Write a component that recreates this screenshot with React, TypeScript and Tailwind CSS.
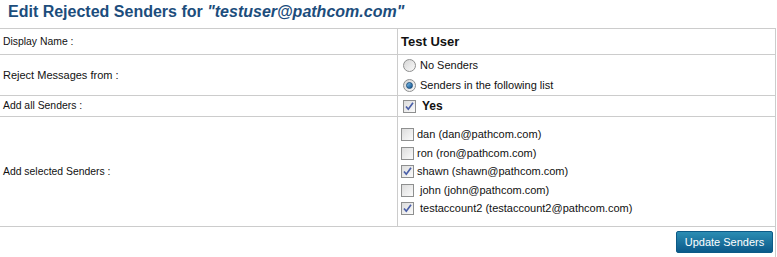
import React from "react";

const senders = [
  { name: "dan", email: "dan@pathcom.com", checked: false, gap: false },
  { name: "ron", email: "ron@pathcom.com", checked: false, gap: false },
  { name: "shawn", email: "shawn@pathcom.com", checked: true, gap: false },
  { name: "john", email: "john@pathcom.com", checked: false, gap: true },
  { name: "testaccount2", email: "testaccount2@pathcom.com", checked: true, gap: true },
];

function Box({ checked }: { checked: boolean }) {
  return (
    <span className="relative inline-block w-[13px] h-[13px] shrink-0 border border-[#8e8f8f] bg-gradient-to-br from-[#dcdcdc] to-[#fbfbfb]">
      {checked && (
        <svg viewBox="0 0 11 11" className="absolute inset-0 w-[11px] h-[11px]">
          <path d="M2 5.5 L4.3 8.2 L9 1.8" fill="none" stroke="#4a5fa8" strokeWidth="1.7" />
        </svg>
      )}
    </span>
  );
}

function Radio({ checked }: { checked: boolean }) {
  return (
    <span className="relative inline-flex items-center justify-center w-[13px] h-[13px] shrink-0 rounded-full border border-[#8e8f8f] bg-gradient-to-br from-[#d6d6d6] to-[#fafafa]">
      {checked && (
        <span className="w-[7px] h-[7px] rounded-full bg-gradient-to-br from-[#7ec3f0] to-[#0a4f8a] border border-[#1d4f7c]" />
      )}
    </span>
  );
}

export default function App() {
  return (
    <div className="w-[777px] h-[257px] bg-white text-[#111] overflow-hidden" style={{ fontFamily: '"Liberation Sans", Arial, sans-serif' }}>
      <h1 className="pl-[8px] pt-[2px] h-[28px] text-[16px] font-bold text-[#1c4d7c] leading-[20px]">
        Edit Rejected Senders for <span className="italic">"testuser@pathcom.com"</span>
      </h1>
      <div className="w-[776px] border-r border-[#cccccc]">
        <div className="grid grid-cols-[397px_1fr] border-t border-[#cccccc]">
          <div className="h-[26px] flex items-center pl-[3px] text-[10.4px] border-b border-[#cccccc]">Display Name :</div>
          <div className="h-[26px] flex items-center pl-[3px] text-[13px] font-bold border-l border-b border-[#cccccc]">Test User</div>

          <div className="h-[41px] flex items-center pl-[3px] text-[11px] border-b border-[#cccccc]">Reject Messages from :</div>
          <div className="h-[41px] flex flex-col justify-center gap-[7px] pl-[5px] text-[11px] border-l border-b border-[#cccccc]">
            <label className="flex items-center gap-[4px] leading-[13px]"><Radio checked={false} />No Senders</label>
            <label className="flex items-center gap-[4px] leading-[13px]"><Radio checked />Senders in the following list</label>
          </div>

          <div className="h-[21px] flex items-center pl-[3px] text-[10.4px] border-b border-[#cccccc]">Add all Senders :</div>
          <div className="h-[21px] flex items-center gap-[6px] pl-[5px] text-[12px] font-bold border-l border-b border-[#cccccc]">
            <Box checked />Yes
          </div>

          <div className="h-[110px] flex items-center pl-[3px] text-[10.4px] border-b border-[#cccccc]">Add selected Senders :</div>
          <div className="h-[110px] flex flex-col justify-center gap-[5.5px] pl-[3px] text-[11px] border-l border-b border-[#cccccc]">
            {senders.map((s) => (
              <label key={s.name} className={`flex items-center leading-[13px] ${s.gap ? "gap-[6px]" : "gap-[3px]"}`}>
                <Box checked={s.checked} />
                <span>{s.name} ({s.email})</span>
              </label>
            ))}
          </div>
        </div>
        <div className="h-[30px] flex items-center justify-end pr-[2px]">
          <button className="w-[97px] h-[22px] rounded-[2px] bg-gradient-to-b from-[#2b8db3] to-[#0b5a8a] text-white text-[11px] leading-[20px] border border-[#0c5a86]">
            Update Senders
          </button>
        </div>
      </div>
    </div>
  );
}
